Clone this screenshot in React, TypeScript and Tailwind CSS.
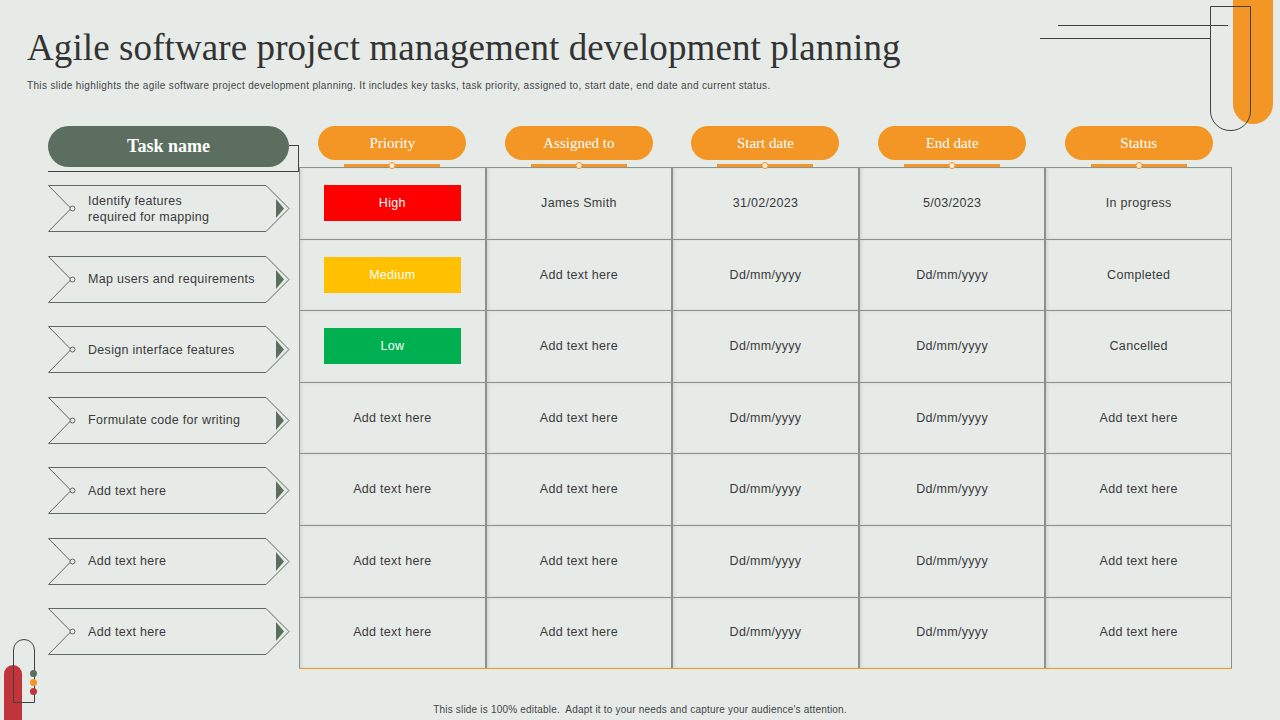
import React from "react";

const heads = ["Priority", "Assigned to", "Start date", "End date", "Status"];
const tasks = ["Identify features\nrequired for mapping", "Map users and requirements", "Design interface features", "Formulate code for writing", "Add text here", "Add text here", "Add text here"];
const rows = [
  ["High", "James Smith", "31/02/2023", "5/03/2023", "In progress"],
  ["Medium", "Add text here", "Dd/mm/yyyy", "Dd/mm/yyyy", "Completed"],
  ["Low", "Add text here", "Dd/mm/yyyy", "Dd/mm/yyyy", "Cancelled"],
  ...Array(4).fill(["Add text here", "Add text here", "Dd/mm/yyyy", "Dd/mm/yyyy", "Add text here"]),
];
const badge: Record<string, string> = { High: "bg-[#ff0000]", Medium: "bg-[#ffc000]", Low: "bg-[#00b050]" };

function Chevron({ text }: { text: string }) {
  return (
    <div className="relative h-[47px] w-[242px]">
      <svg className="absolute inset-0" width="242" height="47" viewBox="0 0 242 47">
        <polygon points="0.5,0.5 218,0.5 241,23.5 218,46.5 0.5,46.5 23,23.5" fill="none" stroke="#5b6a60" strokeWidth="1" />
        <circle cx="24.5" cy="23.5" r="2.5" fill="#e6ebe8" stroke="#5b6a60" strokeWidth="1" />
        <polygon points="228,14 236,23.5 228,33" fill="#5b6e5f" />
      </svg>
      <div className="absolute inset-y-0 left-[40px] right-[28px] flex items-center whitespace-pre-line text-[12.5px] leading-[16px] tracking-[0.3px] text-[#3a3a3a]">
        {text}
      </div>
    </div>
  );
}

export default function App() {
  return (
    <div className="relative h-[720px] w-[1280px] overflow-hidden bg-[#e6ebe8]" style={{ fontFamily: "'Liberation Sans', Arial, sans-serif" }}>
      {/* decorations */}
      <div className="absolute left-[1233px] top-0 h-[124px] w-[40px] rounded-b-[20px] bg-[#f39626]" />
      <div className="absolute left-[1210px] top-[6px] h-[125px] w-[41px] rounded-b-[20px] border border-[#3c4440]" />
      <div className="absolute left-[1058px] top-[25px] h-px w-[170px] bg-[#3c4440]" />
      <div className="absolute left-[1040px] top-[38px] h-px w-[170px] bg-[#3c4440]" />
      <div className="absolute left-[4px] top-[665px] h-[60px] w-[18px] rounded-t-[9px] bg-[#c0343a]" />
      <div className="absolute left-[13px] top-[639px] h-[64px] w-[22px] rounded-t-[11px] border border-[#3c4440]" />
      <div className="absolute left-[30px] top-[670px] h-[7px] w-[7px] rounded-full bg-[#5b6e5f]" />
      <div className="absolute left-[30px] top-[679px] h-[7px] w-[7px] rounded-full bg-[#f39626]" />
      <div className="absolute left-[30px] top-[688px] h-[7px] w-[7px] rounded-full bg-[#c0343a]" />

      <div className="px-[27px] pt-[26px]">
        <h1 className="text-[37px] leading-[44px] tracking-[0.1px] text-[#333]" style={{ fontFamily: "'Liberation Serif', 'Times New Roman', serif" }}>
          Agile software project management development planning
        </h1>
        <p className="mt-[8px] text-[10px] tracking-[0.35px] text-[#444]">
          This slide highlights the agile software project development planning. It includes key tasks, task priority, assigned to, start date, end date and current status.
        </p>
      </div>

      <div className="ml-[48px] mt-[33px] flex">
        <div className="w-[251px]">
          <div className="relative h-[46px]">
            <div className="flex h-[41px] w-[241px] items-center justify-center rounded-full bg-[#5b6e5f] text-[18px] font-bold text-white" style={{ fontFamily: "'Liberation Serif', serif" }}>
              Task name
            </div>
            <div className="absolute left-[241px] top-[19px] h-px w-[10px] bg-[#3c4440]" />
            <div className="absolute left-[250px] top-[19px] h-[27px] w-px bg-[#3c4440]" />
            <div className="absolute left-0 top-[45px] h-px w-[251px] bg-[#3c4440]" />
          </div>
          <div className="mt-[13px] flex flex-col gap-[23.5px]">
            {tasks.map((t, i) => <Chevron key={i} text={t} />)}
          </div>
        </div>
        <div className="w-[933px]">
          <div className="grid h-[41px] grid-cols-5">
            {heads.map((h) => (
              <div key={h} className="relative flex justify-center">
                <div className="flex h-[34px] w-[148px] items-center justify-center rounded-full bg-[#f39626] text-[15px] text-white" style={{ fontFamily: "'Liberation Serif', serif" }}>
                  {h}
                </div>
                <div className="absolute bottom-0 left-1/2 h-[3px] w-[96px] -translate-x-1/2 bg-[#f39626]" />
                <div className="absolute bottom-[-2px] left-1/2 h-[7px] w-[7px] -translate-x-1/2 rounded-full border border-[#f39626] bg-[#fbefe0]" />
              </div>
            ))}
          </div>
          <div className="grid grid-cols-5 border-b border-[#f39626]">
            {rows.map((r, i) =>
              r.map((c: string, j: number) => (
                <div key={i + "-" + j} className="flex h-[71.6px] items-center justify-center border-l border-t border-r border-[#8c918e] text-[12.5px] tracking-[0.3px] text-[#3a3a3a] shadow-[inset_2px_0_3px_rgba(0,0,0,0.08)]">
                  {j === 0 && i < 3 ? (
                    <div className={`flex h-[36px] w-[137px] items-center justify-center text-white ${badge[c]}`}>{c}</div>
                  ) : (
                    c
                  )}
                </div>
              ))
            )}
          </div>
        </div>
      </div>

      <p className="absolute bottom-[3px] left-0 w-full text-center text-[10px] tracking-[0.2px] text-[#444]">
        This slide is 100% editable.&nbsp; Adapt it to your needs and capture your audience's attention.
      </p>
    </div>
  );
}
